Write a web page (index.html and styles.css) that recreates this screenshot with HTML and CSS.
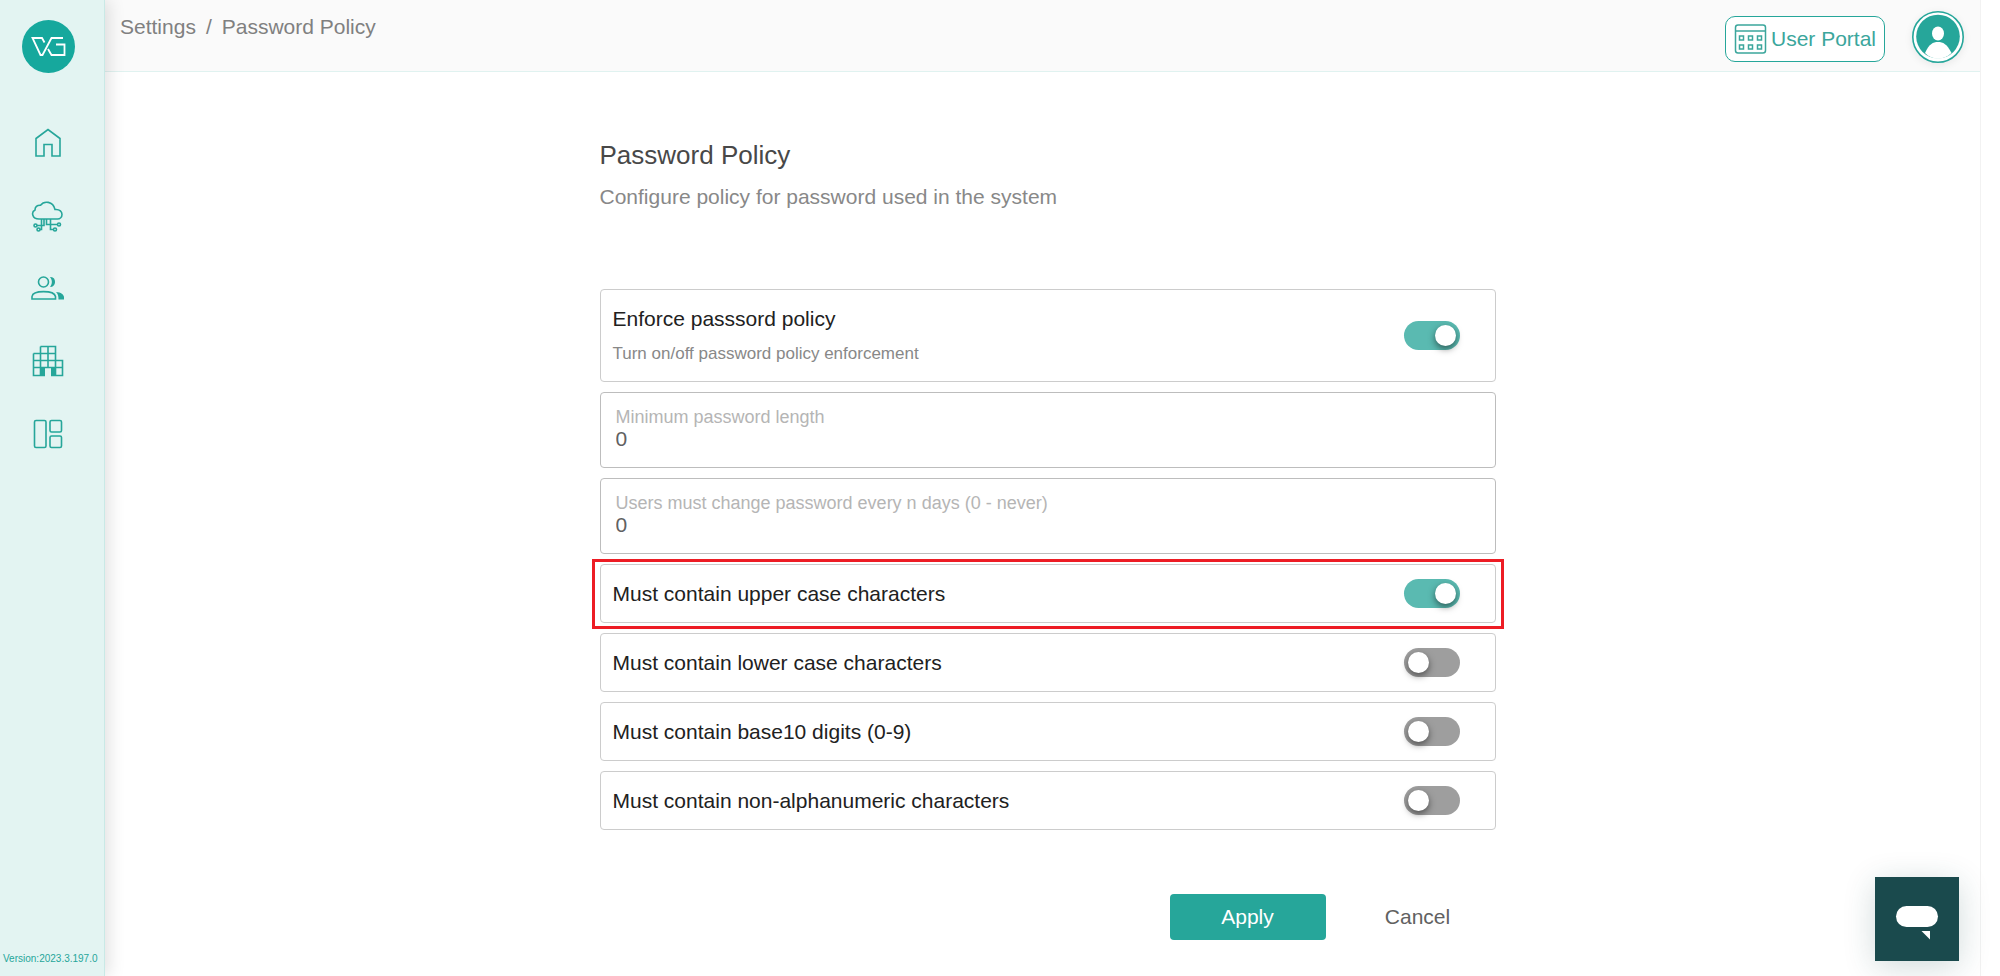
FILE: index.html
```html
<!DOCTYPE html>
<html lang="en">
<head>
<meta charset="utf-8">
<title>Password Policy</title>
<link rel="stylesheet" href="styles.css">
</head>
<body>
<div class="app">
  <aside class="sidebar">
    <a class="logo" href="#" aria-label="Home page">
      <svg width="53" height="53" viewBox="0 0 53 53" fill="none" stroke="#fff" stroke-width="1.8">
        <circle cx="26.5" cy="26.5" r="26.5" fill="#16a89d" stroke="none"/>
        <path d="M22.500 22.500L20 18H10.500L18.500 35H20.500L29.500 18H41"/>
        <path d="M26 29L29.500 35H42.500V24.500H34"/>
      </svg>
    </a>
    <nav class="menu" aria-label="Main">
      <a class="menu-item" href="#" aria-label="Home">
        <svg width="34" height="34" viewBox="0 0 34 34"><path d="M5 12.500L17 3.500L29 12.500V30H21V18.500H13V30H5Z"/></svg>
      </a>
      <a class="menu-item" href="#" aria-label="Cloud">
        <svg width="34" height="34" viewBox="0 0 34 34"><path d="M8 20C1 20 0 13 4 11C4 8 6 6 9.500 6.200C13 1.500 22 2 24 10.500C29 10 31 13 31 15.500C31 18 29 20 26.500 20ZM10.500 20V26.500H6M13 20V26.500H10.500V30.500H9M15.500 20V25.500H26M19.500 20V30.500H22"/><circle cx="4.500" cy="26.500" r="1.500"/><circle cx="7.500" cy="30.500" r="1.500"/><circle cx="28" cy="25.500" r="1.500"/><circle cx="24" cy="30.500" r="1.500"/></svg>
      </a>
      <a class="menu-item" href="#" aria-label="Users">
        <svg width="34" height="34" viewBox="0 0 34 34"><circle cx="12.500" cy="10" r="5"/><path d="M1 27V24.500C2 18 23 18 24.500 24.500V27Z"/><path class="solid" d="M19 5C25.500 4 26 15 19 15C21.500 12 21.500 8 19 5ZM25 20C30 20 33 23 33 25V27.500H27.500C27.500 24 27 22 25 20Z"/></svg>
      </a>
      <a class="menu-item" href="#" aria-label="Organizations">
        <svg width="34" height="34" viewBox="0 0 34 34"><path d="M2.500 8.500H24.500M9.500 1.500H24.500V30.500M2.500 8.500V30.500H14M20 30.500H31.500V15.500H2.500M9.500 1.500V30.500M17 1.500V22.500M2.500 22.500H31.500"/><path class="solid" d="M9.500 22.500H14V30.500H9.500ZM20 22.500H24.500V30.500H20Z"/></svg>
      </a>
      <a class="menu-item" href="#" aria-label="Dashboard">
        <svg width="34" height="34" viewBox="0 0 34 34"><rect x="3.500" y="2.500" width="11.500" height="27" rx="1.500"/><rect x="19" y="2.500" width="11.500" height="11.500" rx="1.500"/><rect x="19" y="18" width="11.500" height="11.500" rx="1.500"/></svg>
      </a>
    </nav>
    <p class="version">Version:2023.3.197.0</p>
  </aside>

  <div class="page">
    <header class="topbar">
      <nav class="breadcrumb" aria-label="Breadcrumb">
        <a href="#">Settings</a><span>/</span><a href="#">Password Policy</a>
      </nav>
      <div class="account">
        <a class="portal" href="#">
          <svg width="33" height="32" viewBox="0 0 33 32" fill="none" stroke="#3ba69c" stroke-width="1.500"><rect x="1.500" y="2" width="30" height="28" rx="2.500"/><path d="M1.500 8H31.500"/><path d="M5.500 13h4v4h-4zM14.500 13h4v4h-4zM23.500 13h4v4h-4zM5.500 22h4v4h-4zM14.500 22h4v4h-4zM23.500 22h4v4h-4z"/></svg>
          <span>User Portal</span>
        </a>
        <button class="avatar" type="button" aria-label="Account">
          <svg width="52" height="52" viewBox="0 0 52 52"><circle cx="26" cy="26" r="25.200" fill="#fff" stroke="#26a69a" stroke-width="1.600"/><circle cx="26" cy="25.500" r="21.800" fill="#26a69a"/><ellipse cx="26" cy="22.500" rx="6" ry="7" fill="#fff"/><path d="M13 42C17 33 21 31 26 31C31 31 35 33 39.500 42C32 49.500 20 49.500 13 42Z" fill="#fff"/></svg>
        </button>
      </div>
    </header>

    <main class="content">
      <form class="policy">
        <h1 class="title">Password Policy</h1>
        <p class="lead">Configure policy for password used in the system</p>

        <div class="options">
          <label class="row row-tall">
            <span class="row-text">Enforce passsord policy<small>Turn on/off password policy enforcement</small></span>
            <input class="switch" type="checkbox" checked>
          </label>
          <label class="field">
            <span>Minimum password length</span>
            <input type="text" inputmode="numeric" value="0">
          </label>
          <label class="field">
            <span>Users must change password every n days (0 - never)</span>
            <input type="text" inputmode="numeric" value="0">
          </label>
          <label class="row row-marked">
            <span class="row-text">Must contain upper case characters</span>
            <input class="switch" type="checkbox" checked>
          </label>
          <label class="row">
            <span class="row-text">Must contain lower case characters</span>
            <input class="switch" type="checkbox">
          </label>
          <label class="row">
            <span class="row-text">Must contain base10 digits (0-9)</span>
            <input class="switch" type="checkbox">
          </label>
          <label class="row">
            <span class="row-text">Must contain non-alphanumeric characters</span>
            <input class="switch" type="checkbox">
          </label>
        </div>

        <div class="actions">
          <button class="btn btn-primary" type="button">Apply</button>
          <button class="btn" type="button">Cancel</button>
        </div>
      </form>
    </main>
  </div>

  <button class="chat" type="button" aria-label="Open chat">
    <svg width="84" height="84" viewBox="0 0 84 84" fill="#fff"><rect x="21" y="29" width="42" height="21" rx="10.500"/><path d="M46.500 54H55V62.500Z"/></svg>
  </button>
</div>
</body>
</html>
```
FILE: styles.css
```css
* {
  box-sizing: border-box;
}

body {
  margin: 0;
  background: #fff;
  color: #212121;
  font-family: "Liberation Sans", Arial, sans-serif;
  font-size: 21px;
  line-height: 24px;
}

a {
  color: inherit;
  text-decoration: none;
}

button,
input {
  margin: 0;
  padding: 0;
  border: 0;
  font: inherit;
}

button {
  cursor: pointer;
}

svg {
  display: block;
}

h1,
p {
  margin: 0;
  font-weight: 400;
}

.app {
  display: flex;
  min-height: 100vh;
}

.sidebar {
  position: relative;
  z-index: 1;
  flex: 0 0 105px;
  display: flex;
  flex-direction: column;
  background: #e3f4f2;
  border-right: 1px solid #c9e9e6;
  box-shadow: 4px 0 16px rgba(0, 0, 0, 0.12);
}

.logo {
  padding: 20px 22px 0;
}

.menu {
  display: flex;
  flex-direction: column;
  gap: 39px;
  padding: 53px 31px 0;
}

.menu-item svg {
  fill: none;
  stroke: #26a69a;
  stroke-width: 1.6px;
}

.menu-item .solid {
  fill: #26a69a;
  stroke: none;
}

.version {
  margin-top: auto;
  padding: 0 3px 11px;
  color: #26a69a;
  font-size: 10px;
  line-height: 12px;
}

.page {
  flex: 1;
  display: flex;
  flex-direction: column;
  margin-right: 19px;
  border-right: 1px solid #f2f2f2;
}

.topbar {
  display: flex;
  justify-content: space-between;
  height: 72px;
  padding: 11px 16px 0 15px;
  background: #fafafa;
  border-bottom: 1px solid #e0f2f0;
}

.breadcrumb {
  display: flex;
  gap: 10px;
  padding-top: 4px;
  color: #808080;
}

.account {
  display: flex;
  align-items: flex-start;
  gap: 27px;
}

.portal {
  display: flex;
  align-items: center;
  gap: 4px;
  height: 46px;
  margin-top: 5px;
  padding: 0 8px;
  border: 1px solid #26a69a;
  border-radius: 10px;
  background: #fff;
  color: #3ba69c;
}

.avatar {
  border-radius: 50%;
  background: none;
  box-shadow: 0 2px 8px rgba(0, 0, 0, 0.08);
}

.content {
  display: flex;
  justify-content: center;
  padding: 68px 0 36px 10px;
}

.policy {
  width: 100%;
  max-width: 896px;
}

.title {
  color: #484848;
  font-size: 26px;
  line-height: 30px;
}

.lead {
  padding-top: 15px;
  color: #888;
}

.options {
  display: flex;
  flex-direction: column;
  gap: 10px;
  padding-top: 80px;
}

.row,
.field {
  border: 1px solid #ccc;
  border-radius: 4px;
}

.row {
  position: relative;
  display: flex;
  align-items: center;
  justify-content: space-between;
  min-height: 59px;
  padding: 0 35px 0 12px;
}

.row-tall {
  min-height: 93px;
}

.row-marked::after {
  content: "";
  position: absolute;
  inset: -6px -9px -7px;
  border: 3px solid #ed1c24;
  pointer-events: none;
}

.row-text small {
  display: block;
  padding-top: 13px;
  color: #888;
  font-size: 17px;
  line-height: 20px;
}

.switch {
  appearance: none;
  width: 56px;
  height: 29px;
  padding: 4px;
  border-radius: 15px;
  background: #9e9e9e;
}

.switch::before {
  content: "";
  display: block;
  width: 21px;
  height: 21px;
  border-radius: 50%;
  background: #fff;
  box-shadow: 0 3px 7px rgba(0, 0, 0, 0.5);
}

.switch:checked {
  background: #5abab1;
}

.switch:checked::before {
  margin-left: auto;
}

.field {
  display: flex;
  flex-direction: column;
  min-height: 76px;
  padding: 14px 15px 0;
  border-color: #bdbdbd;
  color: #b5b5b5;
  font-size: 18px;
  line-height: 20px;
}

.field input {
  width: 100%;
  color: #616161;
  background: none;
  font-size: 21px;
  line-height: 24px;
}

.actions {
  display: flex;
  justify-content: flex-end;
  gap: 14px;
  padding-top: 64px;
}

.btn {
  width: 156px;
  height: 46px;
  border-radius: 4px;
  background: none;
  color: #616161;
}

.btn-primary {
  background: #26a69a;
  color: #fff;
}

.chat {
  position: fixed;
  right: 41px;
  bottom: 15px;
  background: #1a4a4d;
  box-shadow: 0 6px 32px rgba(26, 74, 77, 0.2);
}
```
